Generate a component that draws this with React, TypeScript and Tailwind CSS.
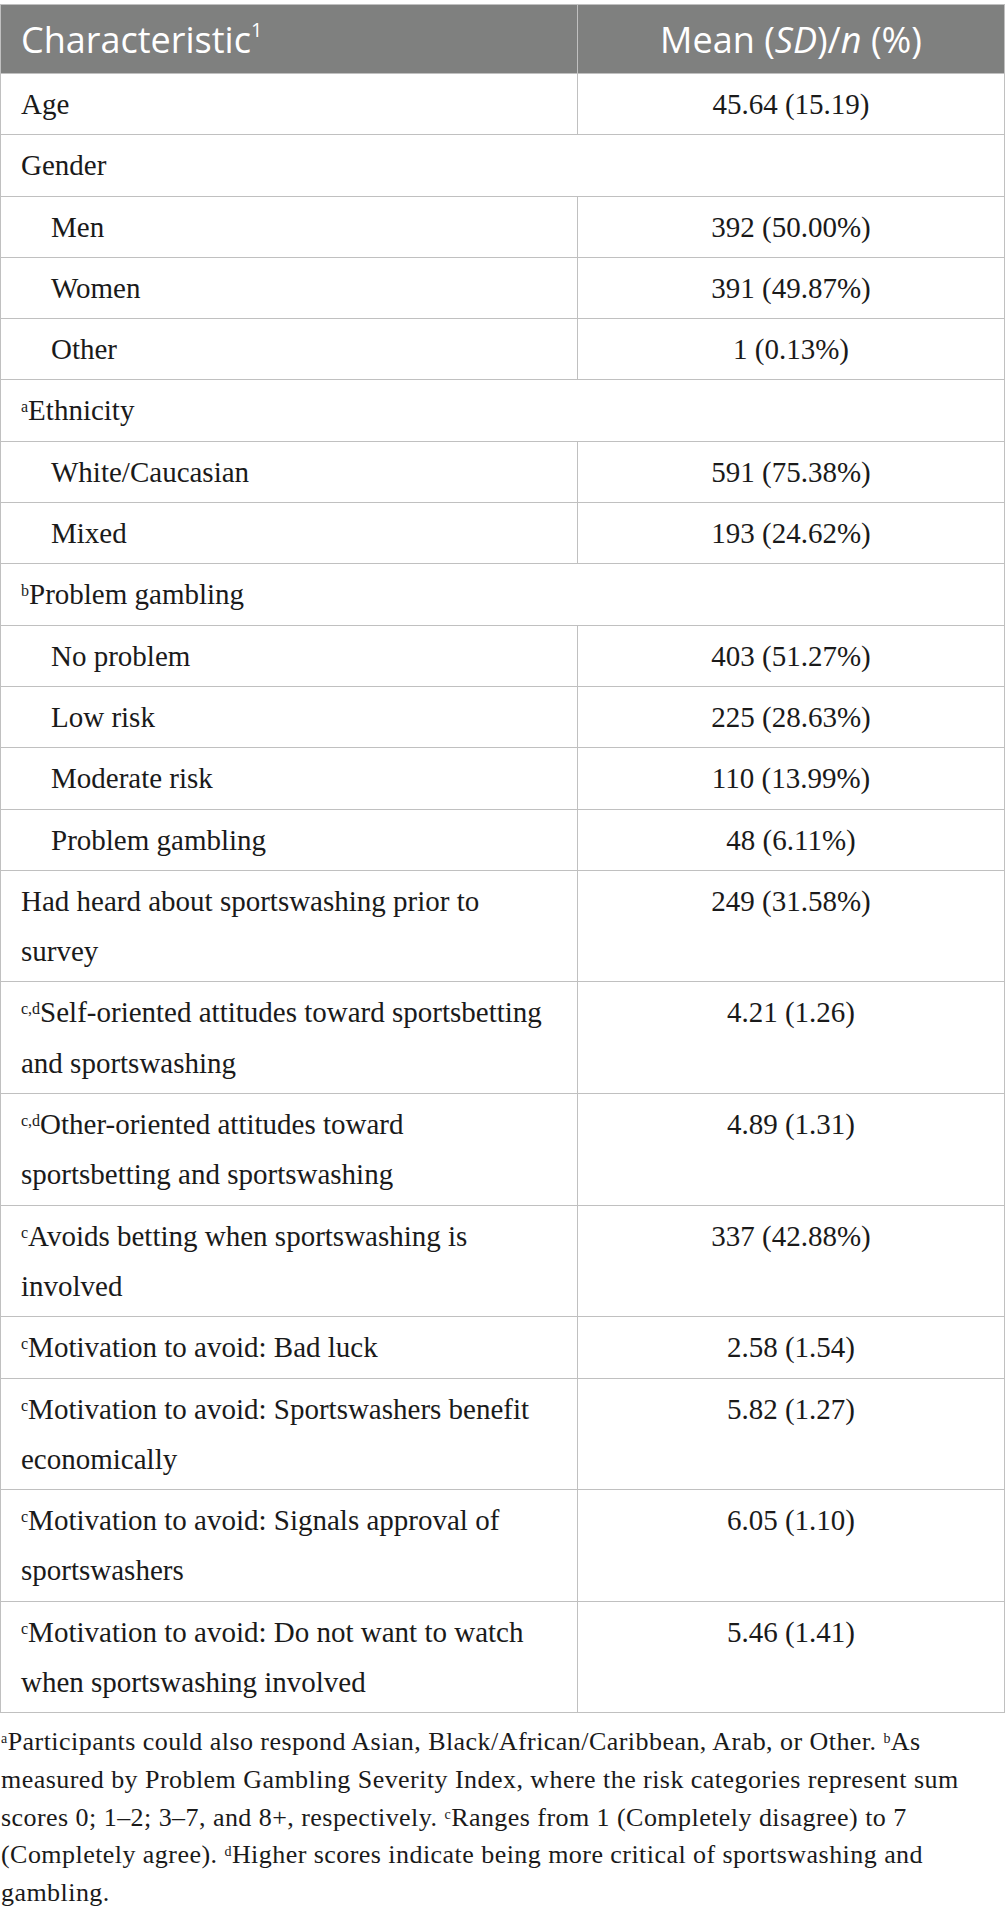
const serif = "font-['Liberation_Serif','Times_New_Roman',serif]";

type Row = {
  label: string;
  sup?: string;
  value?: string;
  indent?: boolean;
};

const rows: Row[] = [
  { label: "Age", value: "45.64 (15.19)" },
  { label: "Gender" },
  { label: "Men", value: "392 (50.00%)", indent: true },
  { label: "Women", value: "391 (49.87%)", indent: true },
  { label: "Other", value: "1 (0.13%)", indent: true },
  { label: "Ethnicity", sup: "a" },
  { label: "White/Caucasian", value: "591 (75.38%)", indent: true },
  { label: "Mixed", value: "193 (24.62%)", indent: true },
  { label: "Problem gambling", sup: "b" },
  { label: "No problem", value: "403 (51.27%)", indent: true },
  { label: "Low risk", value: "225 (28.63%)", indent: true },
  { label: "Moderate risk", value: "110 (13.99%)", indent: true },
  { label: "Problem gambling", value: "48 (6.11%)", indent: true },
  { label: "Had heard about sportswashing prior to survey", value: "249 (31.58%)" },
  { label: "Self-oriented attitudes toward sportsbetting and sportswashing", sup: "c,d", value: "4.21 (1.26)" },
  { label: "Other-oriented attitudes toward sportsbetting and sportswashing", sup: "c,d", value: "4.89 (1.31)" },
  { label: "Avoids betting when sportswashing is involved", sup: "c", value: "337 (42.88%)" },
  { label: "Motivation to avoid: Bad luck", sup: "c", value: "2.58 (1.54)" },
  { label: "Motivation to avoid: Sportswashers benefit economically", sup: "c", value: "5.82 (1.27)" },
  { label: "Motivation to avoid: Signals approval of sportswashers", sup: "c", value: "6.05 (1.10)" },
  { label: "Motivation to avoid: Do not want to watch when sportswashing involved", sup: "c", value: "5.46 (1.41)" },
];

const Sup = ({ children }: { children: string }) => (
  <sup className="text-[16px]">{children}</sup>
);

const TableRow = ({ row }: { row: Row }) => {
  const label = (
    <>
      {row.sup && <Sup>{row.sup}</Sup>}
      {row.label}
    </>
  );

  // group heading rows span both columns
  if (row.value === undefined) {
    return (
      <div className="border-b border-[#c0c0c0] pl-[20px] pr-[20px] py-[5px] leading-[50.3px]">
        {label}
      </div>
    );
  }

  return (
    <div className="grid grid-cols-[577px_1fr] border-b border-[#c0c0c0]">
      <div
        className={`border-r border-[#c0c0c0] py-[5px] pr-[18px] leading-[50.3px] ${
          row.indent ? "pl-[50px]" : "pl-[20px]"
        }`}
      >
        {label}
      </div>
      <div className="py-[5px] px-[10px] text-center leading-[50.3px]">{row.value}</div>
    </div>
  );
};

export default function App() {
  return (
    <div className={`w-[1005px] bg-white pt-[4px] text-[#1a1a1a] ${serif}`}>
      <div className="border-l border-r border-t border-[#c0c0c0] text-[29px]">
        <div className="grid grid-cols-[577px_1fr] border-b border-[#c0c0c0] bg-[#7f807f] font-['Open_Sans',sans-serif] text-[36px] text-white">
          <div className="border-r border-[#c0c0c0] pl-[20px] pt-[10px] pb-[8px] leading-[50px]">
            Characteristic<sup className="top-[-0.8em] text-[20px]">1</sup>
          </div>
          <div className="pt-[10px] pb-[8px] text-center leading-[50px]">
            Mean (<i>SD</i>)/<i>n</i> (%)
          </div>
        </div>
        {rows.map((row, i) => (
          <TableRow key={i} row={row} />
        ))}
      </div>
      <p className="mt-[10px] pl-[1px] text-[26px] leading-[37.7px] tracking-[0.45px]">
        <sup className="text-[14px]">a</sup>Participants could also respond Asian, Black/African/Caribbean, Arab, or
        Other. <sup className="text-[14px]">b</sup>As measured by Problem Gambling Severity Index, where the risk
        categories represent sum scores 0; 1–2; 3–7, and 8+, respectively.{" "}
        <sup className="text-[14px]">c</sup>Ranges from 1 (Completely disagree) to 7 (Completely agree).{" "}
        <sup className="text-[14px]">d</sup>Higher scores indicate being more critical of sportswashing and gambling.
      </p>
    </div>
  );
}
